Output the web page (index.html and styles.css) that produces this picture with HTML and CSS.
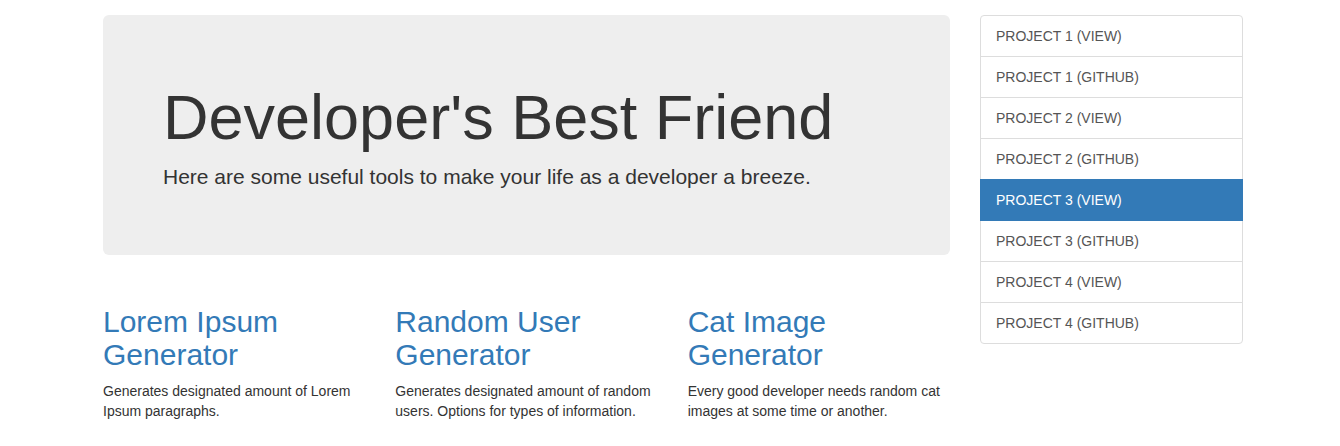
FILE: index.html
```html
<!DOCTYPE html>
<html>
<head>
<meta charset="utf-8">
<title>Developer's Best Friend</title>
<link rel="stylesheet" href="styles.css">
</head>
<body>
<div class="page">
  <div class="main">
    <div class="jumbotron">
      <h1>Developer's Best Friend</h1>
      <p>Here are some useful tools to make your life as a developer a breeze.</p>
    </div>
    <div class="tools">
      <div class="tool">
        <h2>Lorem Ipsum Generator</h2>
        <p>Generates designated amount of Lorem Ipsum paragraphs.</p>
      </div>
      <div class="tool">
        <h2>Random User Generator</h2>
        <p>Generates designated amount of random users. Options for types of information.</p>
      </div>
      <div class="tool">
        <h2>Cat Image Generator</h2>
        <p>Every good developer needs random cat images at some time or another.</p>
      </div>
    </div>
  </div>
  <aside class="side">
    <div class="list-group">
      <a class="item">Project 1 (View)</a>
      <a class="item">Project 1 (Github)</a>
      <a class="item">Project 2 (View)</a>
      <a class="item">Project 2 (Github)</a>
      <a class="item active">Project 3 (View)</a>
      <a class="item">Project 3 (Github)</a>
      <a class="item">Project 4 (View)</a>
      <a class="item">Project 4 (Github)</a>
    </div>
  </aside>
</div>
</body>
</html>
```

FILE: styles.css
```css
* { box-sizing: border-box; }
html, body { margin: 0; padding: 0; }
body {
  font-family: "Liberation Sans", Arial, sans-serif;
  font-size: 14px;
  line-height: 1.42857143;
  color: #333;
  background: #fff;
}
.page {
  display: flex;
  gap: 30px;
  padding: 15px 0 0 103px;
  width: 1243px;
}
.main { width: 847px; flex: none; }
.side { width: 263px; flex: none; }
.jumbotron {
  background: #eee;
  border-radius: 6px;
  padding: 48px 60px;
  margin-bottom: 30px;
}
.jumbotron h1 {
  font-size: 63px;
  font-weight: 500;
  line-height: 1.1;
  margin: 20px 0 10px;
  color: #333;
}
.jumbotron p {
  font-size: 21px;
  font-weight: 200;
  margin: 0 0 15px;
  line-height: 1.42857143;
}
.tools {
  display: flex;
  margin: 0 -15px;
}
.tool {
  width: 33.3333%;
  padding: 0 15px;
}
.tool h2 {
  font-size: 30px;
  font-weight: 500;
  line-height: 1.1;
  color: #337ab7;
  margin: 20px 0 10px;
}
.tool p { margin: 0 0 10px; }
.list-group {
  display: flex;
  flex-direction: column;
}
.item {
  display: block;
  padding: 10px 15px;
  margin-bottom: -1px;
  border: 1px solid #ddd;
  background: #fff;
  color: #555;
  text-transform: uppercase;
  text-decoration: none;
}
.item:first-child { border-top-left-radius: 4px; border-top-right-radius: 4px; }
.item:last-child { border-bottom-left-radius: 4px; border-bottom-right-radius: 4px; margin-bottom: 0; }
.item.active {
  background: #337ab7;
  border-color: #337ab7;
  color: #fff;
  position: relative;
  z-index: 2;
}
```
